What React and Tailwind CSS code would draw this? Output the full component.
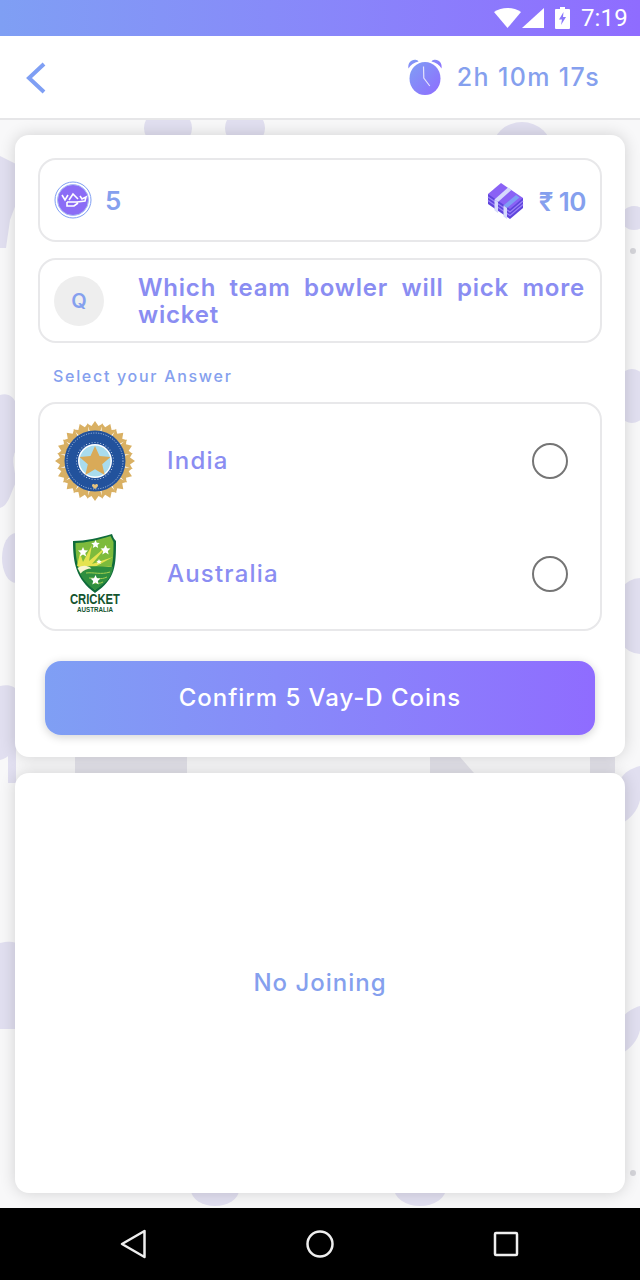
import { useId } from 'react'

const sans = "font-['Inter','Noto_Sans',sans-serif]"

function StatusBar() {
  return (
    <div className="h-9 flex items-center justify-end pr-3 bg-gradient-to-r from-[#7f9ff4] to-[#8f6cff]">
      <svg width="27" height="20" viewBox="0 0 27 20"><path d="M0 4C4 1.200 8.500 0 13.500 0s9.500 1.200 13.500 4L13.500 20z" fill="#fff" /></svg>
      <svg width="22" height="20" viewBox="0 0 22 20" className="ml-px"><path d="M22 0v20H0z" fill="#fff" /></svg>
      <svg width="15" height="22" viewBox="0 0 15 22" className="ml-[11px]">
        <path d="M5 0h5v2h4a1 1 0 0 1 1 1v18a1 1 0 0 1-1 1H1a1 1 0 0 1-1-1V3a1 1 0 0 1 1-1h4z" fill="#fff" />
        <path d="M8.500 5 4 12.500h3L6 18l5-8H8z" fill="#8a78fb" />
      </svg>
      <span className="ml-[11px] text-[24px] leading-none text-white font-['Roboto',sans-serif] tracking-[0.2px]">7:19</span>
    </div>
  )
}

function AlarmIcon() {
  const id = useId()
  return (
    <svg width="36" height="38" viewBox="0 0 36 38">
      <defs>
        <linearGradient id={id} x1="0" y1="0" x2="1" y2="1">
          <stop offset="0" stopColor="#7f9ff4" />
          <stop offset="1" stopColor="#8f6cff" />
        </linearGradient>
      </defs>
      <path d="M1.500 10.500C.5 5 4.500 .8 9.500 2c1 .3 1.700.8 2 1.500C7 4.500 3.500 7 1.500 10.500zM34.500 10.500C35.500 5 31.500 .8 26.500 2c-1 .3-1.700.8-2 1.500C29 4.500 32.500 7 34.500 10.500z" fill={`url(#${id})`} />
      <ellipse cx="18" cy="20.500" rx="15.500" ry="16.500" fill={`url(#${id})`} />
      <path d="M16.500 8.500 16.800 20l6 8" fill="none" stroke="#e4e2fb" strokeWidth="1.200" />
    </svg>
  )
}

function CoinIcon() {
  return (
    <svg width="38" height="38" viewBox="0 0 38 38">
      <circle cx="19" cy="19" r="18" fill="#fff" stroke="#7f9ff4" strokeWidth="1" />
      <circle cx="19" cy="19" r="15.500" fill="#8b6cf6" stroke="#a9bdf5" strokeWidth="1" />
      <path d="M8 14l3 5 3-5M15 19l4-6 5 5M26 15l2 3 4-2-1 4-8 1M13 21h12M13 21v4h7l4-3" fill="none" stroke="#fff" strokeWidth="1.600" />
    </svg>
  )
}

function CashIcon() {
  return (
    <svg width="40" height="38" viewBox="0 0 40 38">
      <path d="M2 12v10l22 15 13-11V16z" fill="#5f45dc" />
      <path d="M2 15 24 30 37 19M2 18.500 24 33.500 37 22.500" fill="none" stroke="#9a80f8" strokeWidth="1.300" />
      <path d="M2 12 15 1 37 16 24 27z" fill="#8a62f5" />
      <path d="M22 5.500 25.500 8 12 20 8.500 17.500z" fill="#d6dafc" />
      <path d="M30 13 33.500 15.500 21 26 17.500 23.500z" fill="#7f9ff4" />
      <path d="M8.500 17.500 12 20v11l-3.500-2.500zM17.500 23.500 21 26v11l-3.500-2.500z" fill="#d6dafc" />
    </svg>
  )
}

// BCCI crest
function IndiaCrest() {
  const rays = Array.from({ length: 16 }, (_, i) => i * 22.5)
  const dots = Array.from({ length: 40 }, (_, i) => i * 9)
  return (
    <svg width="82" height="82" viewBox="0 0 82 82">
      {rays.map((a) => (
        <path key={a} d="M41 1 37.500 6 33 3.500 36 12 38.500 12 41 16 43.500 12 46 12 49 3.500 44.500 6z" fill="#d9b063" transform={`rotate(${a} 41 41)`} />
      ))}
      <circle cx="41" cy="41" r="30.500" fill="#22529c" />
      <circle cx="41" cy="41" r="28" fill="none" stroke="#b9cde8" strokeWidth="1" strokeDasharray="1 1.500" />
      <circle cx="41" cy="41" r="17" fill="#fff" />
      <circle cx="41" cy="41" r="15.500" fill="#a9dcee" />
      {dots.map((a) => (
        <circle key={a} cx="41" cy="22.500" r="0.500" fill="#dfe9f5" transform={`rotate(${a} 41 41)`} />
      ))}
      <path d="M41 26l4.500 10 11 1-8.300 7.200 2.500 10.800L41 49.300 31.300 55l2.500-10.800L25.500 37l11-1z" fill="#d9aa58" />
      <path d="M41 69c-2-1.500-3-2.200-3-3.400 0-1.800 2.300-2 3-.6.700-1.400 3-1.200 3 .6 0 1.200-1 1.900-3 3.400z" fill="#e5c37e" />
    </svg>
  )
}

function AustraliaCrest() {
  return (
    <svg width="76" height="86" viewBox="-9 0 76 86" className="mt-1">
      <path d="M7 8C20 8 32 5 46 1c1 3 2 5 4 7 0 24 0 38-21 52C10 46 7 30 7 8z" fill="#0f6b3b" />
      <path d="M9.500 10c11 0 22-3 35-7 1 2 2 4 3 6 0 23-1 35-18.500 48C13 44 9.500 30 9.500 10z" fill="#7dbb3c" />
      <path d="M11 33 14 20 17 29 26 12 23 28 42 12 26 31 47 24 27 35 47 33 25 38z" fill="#e4e34f" />
      <path d="M12 35c9-3 18-1 35-1-1 10-7 16-18 23C20 50 14 44 12 35z" fill="#2f8f3f" />
      <path d="M11.500 35c5-3 10-3 14 .5-4 0-8 1.500-11 5z" fill="#f8f5cf" />
      <path d="M20 40c8-1 15 2 24-1M23 45c7 0 12 2 18-1M27 50c4 0 7 1 10-1" fill="none" stroke="#a6cf4f" strokeWidth="1" />
      <path d="M17 14l1.500 3.300 3.500.3-2.700 2.300.9 3.600-3.200-1.900-3.200 1.900.9-3.600-2.700-2.300 3.500-.3zM29.500 7l1.300 2.700 3 .3-2.300 2 .7 3-2.700-1.600-2.700 1.600.7-3-2.300-2 3-.3zM39.500 12l1.500 3.300 3.500.3-2.700 2.300.9 3.600-3.200-1.900-3.200 1.900.9-3.600-2.700-2.300 3.500-.3zM33 26l.8 1.700 1.900.2-1.400 1.300.4 1.800-1.700-1-1.700 1 .4-1.800-1.400-1.300 1.900-.2zM29.500 42l1.500 3.300 3.500.3-2.700 2.300.9 3.600-3.200-1.900-3.200 1.900.9-3.600-2.700-2.300 3.500-.3z" fill="#fff" />
      <text x="29" y="71" textAnchor="middle" fontFamily="'Liberation Sans',sans-serif" fontSize="14" fontWeight="700" textLength="50" lengthAdjust="spacingAndGlyphs" fill="#13542f">CRICKET</text>
      <text x="29" y="79" textAnchor="middle" fontFamily="'Liberation Sans',sans-serif" fontSize="7" fontWeight="700" textLength="36" lengthAdjust="spacingAndGlyphs" fill="#13542f">AUSTRALIA</text>
    </svg>
  )
}

// faint doodles behind the cards, only the edges show
function Doodles() {
  return (
    <svg width="640" height="1088" viewBox="0 0 640 1088" className="absolute left-0 top-0" fill="#e1dff0">
      <ellipse cx="168" cy="8" rx="24" ry="20" /><ellipse cx="245" cy="8" rx="20" ry="18" /><ellipse cx="522" cy="30" rx="30" ry="28" />
      <path d="M0 36 16 44V84L10 100 6 128H0z" />
      <path d="M0 275C8 272 15 278 16 284V330C10 340 16 352 16 362 10 375 8 386 0 388z" />
      <ellipse cx="16" cy="438" rx="14" ry="25" />
      <path d="M0 566c8-2 16 0 18 6v52c-6 6-8 14-18 16z" />
      <path d="M8 623h8v40H8z" />
      <path d="M0 823c8-2 16-2 18 2v84H0z" />
      <ellipse cx="634" cy="98" rx="13" ry="12" />
      <circle cx="633" cy="131" r="3" fill="#d5d5da" />
      <ellipse cx="632" cy="276" rx="18" ry="27" />
      <ellipse cx="640" cy="496" rx="28" ry="38" />
      <path d="M640 646c-8 2-16 6-20 14v44c10-4 18-14 20-24z" />
      <path d="M640 886c-8 2-16 8-20 14v34c10-4 18-14 20-24z" />
      <circle cx="633" cy="1053" r="3" fill="#d5d5da" />
      <path d="M75 637h112v16H75zM430 637h30l14 16h-44zM590 637h25v16h-25z" fill="#e3e2ea" />
      <ellipse cx="215" cy="1070" rx="24" ry="16" /><ellipse cx="420" cy="1068" rx="26" ry="18" />
    </svg>
  )
}

function RadioRow({ crest, name }) {
  return (
    <div className="h-[113px] flex items-center">
      <div className="w-[82px] ml-[14px] flex justify-center shrink-0">{crest}</div>
      <span className="ml-[31px] flex-1 text-[24px] font-medium tracking-[1.2px] text-[#8a8df2]">{name}</span>
      <div className="w-9 h-9 mr-[32px] rounded-full border-2 border-[#757575]" />
    </div>
  )
}

function NavBar() {
  return (
    <div className="h-[72px] bg-black flex items-center">
      <svg width="28" height="30" viewBox="0 0 28 30" className="ml-[120px]"><path d="M2 15 24.500 2v26z" fill="none" stroke="#eee" strokeWidth="2.500" strokeLinejoin="round" /></svg>
      <svg width="30" height="30" viewBox="0 0 30 30" className="ml-[157px]"><circle cx="15" cy="15" r="12.500" fill="none" stroke="#eee" strokeWidth="2.500" /></svg>
      <svg width="26" height="26" viewBox="0 0 26 26" className="ml-[158px]"><rect x="2" y="2" width="22" height="22" rx="1" fill="none" stroke="#eee" strokeWidth="2.500" /></svg>
    </div>
  )
}

export default function App() {
  return (
    <div className={`w-[640px] h-[1280px] flex flex-col overflow-hidden bg-[#f8f8f9] ${sans}`}>
      <StatusBar />
      <header className="h-[84px] bg-white border-b-2 border-[#e6e6e8] flex items-center pl-[25px] pr-10 shrink-0">
        <svg width="22" height="32" viewBox="0 0 22 32" className="mt-0.5"><path d="M19 2 4 16l15 14" fill="none" stroke="#7f9ff4" strokeWidth="4" /></svg>
        <div className="ml-auto flex items-center">
          <AlarmIcon />
          <span className="ml-[14px] mt-px text-[25px] font-medium tracking-[1.35px] text-[#85a0ee]">2h 10m 17s</span>
        </div>
      </header>

      <main className="relative flex-1 overflow-hidden px-[15px] pt-[15px]">
        <Doodles />
        <section className="relative h-[622px] bg-white rounded-[14px] shadow-[0_0_16px_rgba(0,0,0,0.16)] px-[23px] pt-[23px]">
          <div className="h-[84px] rounded-[18px] border-2 border-[#e8e8ea] flex items-center px-[14px]">
            <CoinIcon />
            <span className="ml-[13px] text-[26px] font-semibold text-[#85a0ee]">5</span>
            <div className="ml-auto flex items-center pt-0.5">
              <CashIcon />
              <span className="ml-[13px] text-[26px] font-semibold tracking-[-0.5px] text-[#85a0ee]">₹ 10</span>
            </div>
          </div>

          <div className="mt-4 h-[85px] rounded-[18px] border-2 border-[#e8e8ea] flex items-center pl-[14px] pr-[15px]">
            <div className="w-[50px] h-[50px] rounded-full bg-[#eeeeee] flex items-center justify-center shrink-0 text-[20px] font-semibold text-[#85a0ee]">Q</div>
            <p className="ml-[34px] flex-1 text-[24px] leading-[27px] font-semibold tracking-[0.8px] text-[#8a8df2] text-justify">Which team bowler will pick more wicket</p>
          </div>

          <p className="mt-[23px] ml-[15px] text-[16px] leading-5 font-medium tracking-[1.7px] text-[#85a0ee]">Select your Answer</p>

          <div className="mt-4 h-[229px] rounded-[18px] border-2 border-[#e8e8ea]">
            <RadioRow crest={<IndiaCrest />} name="India" />
            <RadioRow crest={<AustraliaCrest />} name="Australia" />
          </div>

          <button className="mt-[30px] ml-[7px] w-[550px] h-[74px] rounded-[16px] bg-gradient-to-r from-[#7f9ff4] to-[#8f6cff] shadow-[0_2px_10px_rgba(0,0,0,0.18)] text-white text-[24px] font-medium tracking-[0.95px]">
            Confirm 5 Vay-D Coins
          </button>
        </section>

        <section className="relative mt-4 h-[420px] bg-white rounded-[14px] shadow-[0_0_16px_rgba(0,0,0,0.16)] flex items-center justify-center">
          <span className="text-[24px] font-medium tracking-[1px] text-[#85a0ee]">No Joining</span>
        </section>
      </main>

      <NavBar />
    </div>
  )
}
